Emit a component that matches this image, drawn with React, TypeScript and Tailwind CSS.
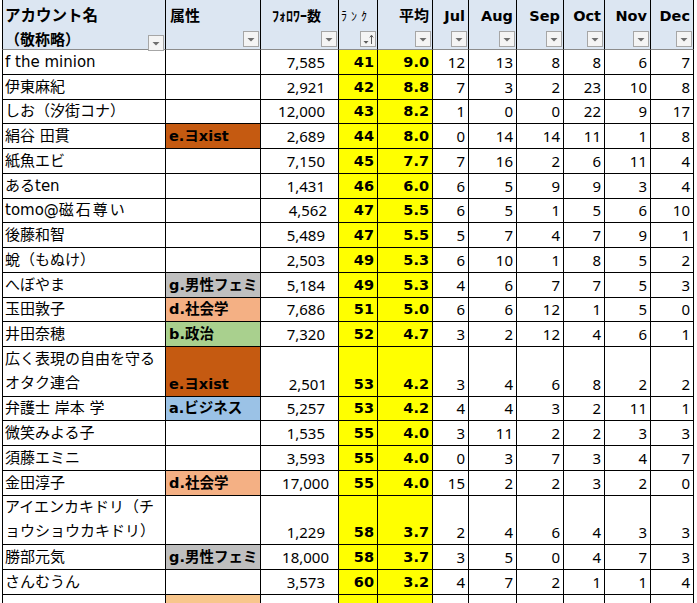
import React from "react";

const GRID = "grid grid-cols-[164px_95px_78px_39px_55px_36px_48px_47px_41px_46px_43px]";
const NAME_FONT = "font-['DejaVu_Sans','Noto_Sans_CJK_JP',sans-serif]";
const NUM_FONT = "font-['Noto_Sans','DejaVu_Sans',sans-serif]";
const BOLD_FONT = "font-['DejaVu_Sans','Noto_Sans_CJK_JP',sans-serif] font-bold";

const ATTR: Record<string, { label: string; bg: string }> = {
  e: { label: "e.ヨxist", bg: "bg-[#c55a11]" },
  g: { label: "g.男性フェミ", bg: "bg-[#bfbfbf]" },
  d: { label: "d.社会学", bg: "bg-[#f4b084]" },
  b: { label: "b.政治", bg: "bg-[#a9d08e]" },
  a: { label: "a.ビジネス", bg: "bg-[#9bc2e6]" },
};

type Row = {
  name: React.ReactNode;
  attr?: string;
  followers: string;
  fpad?: string;
  rank: number;
  avg: string;
  m: number[];
  tall?: boolean;
};

const rows: Row[] = [
  { name: "f the minion", followers: "7,585", rank: 41, avg: "9.0", m: [12, 13, 8, 8, 6, 7] },
  { name: "伊東麻紀", followers: "2,921", rank: 42, avg: "8.8", m: [7, 3, 2, 23, 10, 8] },
  { name: "しお（汐街コナ）", followers: "12,000", rank: 43, avg: "8.2", m: [1, 0, 0, 22, 9, 17] },
  { name: "絹谷 田貫", attr: "e", followers: "2,689", rank: 44, avg: "8.0", m: [0, 14, 14, 11, 1, 8] },
  { name: "紙魚エビ", followers: "7,150", rank: 45, avg: "7.7", m: [7, 16, 2, 6, 11, 4] },
  { name: "あるten", followers: "1,431", rank: 46, avg: "6.0", m: [6, 5, 9, 9, 3, 4] },
  {
    name: (
      <>
        tomo@<span className="tracking-[2px]">磁石尊い</span>
      </>
    ),
    followers: "4,562",
    fpad: "pr-[11px]",
    rank: 47,
    avg: "5.5",
    m: [6, 5, 1, 5, 6, 10],
  },
  { name: "後藤和智", followers: "5,489", rank: 47, avg: "5.5", m: [5, 7, 4, 7, 9, 1] },
  { name: "蛻（もぬけ）", followers: "2,503", rank: 49, avg: "5.3", m: [6, 10, 1, 8, 5, 2] },
  { name: "へぼやま", attr: "g", followers: "5,184", rank: 49, avg: "5.3", m: [4, 6, 7, 7, 5, 3] },
  { name: "玉田敦子", attr: "d", followers: "7,686", rank: 51, avg: "5.0", m: [6, 6, 12, 1, 5, 0] },
  { name: "井田奈穂", attr: "b", followers: "7,320", rank: 52, avg: "4.7", m: [3, 2, 12, 4, 6, 1] },
  {
    name: (
      <>
        広く表現の自由を守る
        <br />
        オタク連合
      </>
    ),
    attr: "e",
    followers: "2,501",
    fpad: "pr-[11px]",
    rank: 53,
    avg: "4.2",
    m: [3, 4, 6, 8, 2, 2],
    tall: true,
  },
  { name: "弁護士 岸本 学", attr: "a", followers: "5,257", rank: 53, avg: "4.2", m: [4, 4, 3, 2, 11, 1] },
  { name: "微笑みよる子", followers: "1,535", rank: 55, avg: "4.0", m: [3, 11, 2, 2, 3, 3] },
  { name: "須藤エミニ", followers: "3,593", rank: 55, avg: "4.0", m: [0, 3, 7, 3, 4, 7] },
  { name: "金田淳子", attr: "d", followers: "17,000", fpad: "pr-[9px]", rank: 55, avg: "4.0", m: [15, 2, 2, 3, 2, 0] },
  {
    name: (
      <>
        アイエンカキドリ（チ
        <br />
        ョウショウカキドリ）
      </>
    ),
    followers: "1,229",
    rank: 58,
    avg: "3.7",
    m: [2, 4, 6, 4, 3, 3],
    tall: true,
  },
  { name: "勝部元気", attr: "g", followers: "18,000", fpad: "pr-[9px]", rank: 58, avg: "3.7", m: [3, 5, 0, 4, 7, 3] },
  { name: "さんむうん", followers: "3,573", rank: 60, avg: "3.2", m: [4, 7, 2, 1, 1, 4] },
];

function FilterButton({ sort }: { sort?: boolean }) {
  return (
    <span className="w-[16px] h-[16px] border border-[#a6a6a6] bg-[#f4f4f4] flex items-center justify-center shrink-0">
      <svg width="14" height="14" viewBox="0 0 14 14">
        {sort ? (
          <>
            <path d="M2.5 9h5l-2.5 2.8z" fill="#5c5c5c" />
            <path d="M10.5 12V3.5M8.8 5.4l1.7-2.2 1.7 2.2" stroke="#5c5c5c" fill="none" strokeWidth="1" />
          </>
        ) : (
          <path d="M3.5 6h7l-3.5 3.5z" fill="#6e6e6e" />
        )}
      </svg>
    </span>
  );
}

function HeaderCell({
  top,
  bottom,
  align = "left",
  first,
  sort,
}: {
  top: React.ReactNode;
  bottom?: React.ReactNode;
  align?: "left" | "right";
  first?: boolean;
  sort?: boolean;
}) {
  return (
    <div
      className={`h-[50px] bg-[#dce6f2] border-r border-b border-r-black border-b-[#8c8c8c] flex flex-col ${
        first ? "border-l border-l-black" : ""
      }`}
    >
      <div
        className={`pt-[3px] leading-[24px] whitespace-nowrap ${align === "right" ? "text-right pr-[3px]" : "pl-[2px]"}`}
      >
        {top}
      </div>
      <div className="flex-1 flex items-end justify-between pb-[2px] pr-[1px]">
        <span className="leading-[22px] pl-[2px] whitespace-nowrap">{bottom}</span>
        <FilterButton sort={sort} />
      </div>
    </div>
  );
}

function Cell({
  children,
  className = "",
  tall,
  first,
}: {
  children?: React.ReactNode;
  className?: string;
  tall?: boolean;
  first?: boolean;
}) {
  return (
    <div
      className={`${tall ? "h-[49.5px]" : "h-[24.75px]"} border-r border-b border-black flex items-end overflow-hidden whitespace-nowrap ${
        first ? "border-l" : ""
      } ${className}`}
    >
      {children}
    </div>
  );
}

export default function App() {
  return (
    <div className="w-[697px] h-[603px] overflow-hidden bg-white pl-[2px] text-black">
      <div className="w-fit">
        <div className={`${GRID} text-[15px]`}>
          <HeaderCell
            first
            top={<span className={`${BOLD_FONT} text-[15.5px]`}>アカウント名</span>}
            bottom={<span className={`${BOLD_FONT} text-[15px]`}>（敬称略）</span>}
          />
          <HeaderCell top={<span className={`${BOLD_FONT} pl-[2px]`}>属性</span>} />
          <HeaderCell
            top={<span className={`${BOLD_FONT} text-[14px] pl-[9px]`}>ﾌｫﾛﾜｰ数</span>}
          />
          <HeaderCell
            sort
            top={
              <span className="font-['Noto_Sans_CJK_JP',sans-serif] text-[12px] tracking-[4px]">ﾗﾝｸ</span>
            }
          />
          <HeaderCell align="right" top={<span className={BOLD_FONT}>平均</span>} />
          {["Jul", "Aug", "Sep", "Oct", "Nov", "Dec"].map((mo) => (
            <HeaderCell key={mo} align="right" top={<span className={`${BOLD_FONT} text-[14.5px]`}>{mo}</span>} />
          ))}
        </div>

        {rows.map((r, i) => {
          const attr = r.attr ? ATTR[r.attr] : undefined;
          return (
            <div key={i} className={GRID}>
              <Cell first tall={r.tall} className="pb-[1px]">
                <span
                  className={`${NAME_FONT} text-[15px] pl-[2px] ${r.tall ? "leading-[24px]" : "leading-[22px]"}`}
                >
                  {r.name}
                </span>
              </Cell>
              <Cell tall={r.tall} className={`pb-[1px] ${attr ? attr.bg : ""}`}>
                {attr && (
                  <span className={`${BOLD_FONT} text-[14.5px] leading-[22px] pl-[3px]`}>{attr.label}</span>
                )}
              </Cell>
              <Cell tall={r.tall} className={`justify-end pb-[1px] ${r.fpad ?? "pr-[13px]"}`}>
                <span className={`${NUM_FONT} text-[15px] leading-[22px]`}>{r.followers}</span>
              </Cell>
              <Cell tall={r.tall} className="justify-end pb-[1px] pr-[3px] bg-[#ffff00]">
                <span className={`${BOLD_FONT} text-[14.5px] leading-[22px]`}>{r.rank}</span>
              </Cell>
              <Cell tall={r.tall} className="justify-end pb-[1px] pr-[3px] bg-[#ffff00]">
                <span className={`${BOLD_FONT} text-[14.5px] leading-[22px]`}>{r.avg}</span>
              </Cell>
              {r.m.map((v, j) => (
                <Cell key={j} tall={r.tall} className="justify-end pb-[1px] pr-[3px]">
                  <span className={`${NUM_FONT} text-[15px] leading-[22px]`}>{v}</span>
                </Cell>
              ))}
            </div>
          );
        })}

        <div className={GRID}>
          <Cell first />
          <Cell className="bg-[#f8c68c]" />
          <Cell />
          <Cell className="bg-[#ffff00]" />
          <Cell className="bg-[#ffff00]" />
          <Cell />
          <Cell />
          <Cell />
          <Cell />
          <Cell />
          <Cell />
        </div>
      </div>
    </div>
  );
}
